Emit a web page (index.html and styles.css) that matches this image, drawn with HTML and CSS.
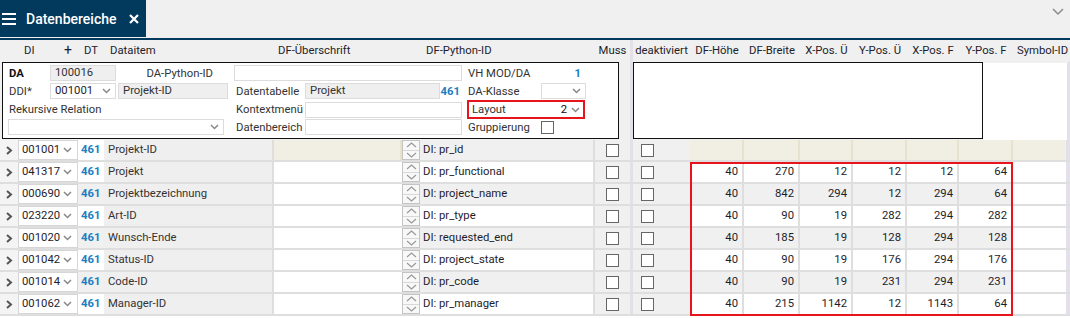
FILE: index.html
```html
<!DOCTYPE html>
<html lang="de">
<head>
    <meta charset="UTF-8">
    <title>Datenbereiche</title>
    <link rel="stylesheet" href="styles.css">
</head>
<body>
    <div class="topbar">
        <div class="tab">
            <svg class="burger" width="14" height="14" viewBox="0 0 14 14"><path d="M0 2h14M0 7h14M0 12h14" stroke="#fff" stroke-width="2"/></svg>
            <span class="tab-title">Datenbereiche</span>
            <svg class="close" width="10" height="10" viewBox="0 0 10 10"><path d="M1 1l8 8M9 1l-8 8" stroke="#fff" stroke-width="2.2"/></svg>
        </div>
        <div class="spacer"></div>
        <svg class="collapse" width="12" height="8" viewBox="0 0 12 8"><path d="M1 1l5 5 5-5" fill="none" stroke="#8a8a8a" stroke-width="1.5"/></svg>
    </div>

    <div class="grid head">
        <div></div>
        <div class="h-di"><span>DI</span><span class="plus">+</span></div>
        <div class="h-l">DT</div>
        <div class="h-l">Dataitem</div>
        <div class="h-l h-dfu">DF-Überschrift</div>
        <div></div>
        <div class="h-l">DF-Python-ID</div>
        <div class="h-c">Muss</div>
        <div class="sep"></div>
        <div class="h-c">deaktiviert</div>
        <div class="h-c">DF-Höhe</div>
        <div class="h-c">DF-Breite</div>
        <div class="h-c">X-Pos. Ü</div>
        <div class="h-c">Y-Pos. Ü</div>
        <div class="h-c">X-Pos. F</div>
        <div class="h-c">Y-Pos. F</div>
        <div class="h-l h-sym">Symbol-ID</div>
        <div></div>
    </div>

    <div class="detail">
        <div class="detail-box">
            <div class="f-row">
                <b class="lbl c1">DA</b>
                <div class="ro c2">100016</div>
                <div class="lbl c3 right">DA-Python-ID</div>
                <div class="inp c4-6 wide"></div>
                <div class="lbl c7">VH MOD/DA</div>
                <div class="num-blue c8">1</div>
            </div>
            <div class="f-row">
                <div class="lbl c1">DDI*</div>
                <div class="sel c2">001001 <svg class="chev" width="9" height="6" viewBox="0 0 9 6"><path d="M1 1l3.5 3.5L8 1" fill="none" stroke="#888" stroke-width="1.5"/></svg></div>
                <div class="ro c3">Projekt-ID</div>
                <div class="lbl c4">Datentabelle</div>
                <div class="ro c5">Projekt</div>
                <div class="num-blue c6">461</div>
                <div class="lbl c7">DA-Klasse</div>
                <div class="sel c8"><svg class="chev" width="9" height="6" viewBox="0 0 9 6"><path d="M1 1l3.5 3.5L8 1" fill="none" stroke="#888" stroke-width="1.5"/></svg></div>
            </div>
            <div class="f-row">
                <div class="lbl c1-3">Rekursive Relation</div>
                <div class="lbl c4">Kontextmenü</div>
                <div class="inp c5-6"></div>
                <div class="layout c7-8">
                    <span>Layout</span>
                    <span class="layout-val">2 <svg class="chev" width="9" height="6" viewBox="0 0 9 6"><path d="M1 1l3.5 3.5L8 1" fill="none" stroke="#888" stroke-width="1.5"/></svg></span>
                </div>
            </div>
            <div class="f-row">
                <div class="sel c1-3 rek"><svg class="chev" width="9" height="6" viewBox="0 0 9 6"><path d="M1 1l3.5 3.5L8 1" fill="none" stroke="#888" stroke-width="1.5"/></svg></div>
                <div class="lbl c4">Datenbereich</div>
                <div class="inp c5-6"></div>
                <div class="lbl c7">Gruppierung</div>
                <div class="c8 check-cell"><span class="check"></span></div>
            </div>
        </div>
        <div class="gap"></div>
        <div class="sep"></div>
        <div class="detail-side"></div>
        <div class="detail-rest"></div>
    </div>

    <div class="rows" id="rows">
        <div class="marker"></div>
    </div>

    <script>
        const rows = [
            ['001001', 'Projekt-ID', 'pr_id', []],
            ['041317', 'Projekt', 'pr_functional', [40, 270, 12, 12, 12, 64]],
            ['000690', 'Projektbezeichnung', 'project_name', [40, 842, 294, 12, 294, 64]],
            ['023220', 'Art-ID', 'pr_type', [40, 90, 19, 282, 294, 282]],
            ['001020', 'Wunsch-Ende', 'requested_end', [40, 185, 19, 128, 294, 128]],
            ['001042', 'Status-ID', 'project_state', [40, 90, 19, 176, 294, 176]],
            ['001014', 'Code-ID', 'pr_code', [40, 90, 19, 231, 294, 231]],
            ['001062', 'Manager-ID', 'pr_manager', [40, 215, 1142, 12, 1143, 64]]
        ];

        const container = document.getElementById('rows');
        const chev = '<svg class="chev" width="9" height="6" viewBox="0 0 9 6"><path d="M1 1l3.5 3.5L8 1" fill="none" stroke="#888" stroke-width="1.5"/></svg>';

        rows.forEach((r, i) => {
            const row = document.createElement('div');
            row.className = 'grid row' + (i === 0 ? ' selected' : (i % 2 === 0 ? ' odd' : ''));
            let nums = '';
            for (let k = 0; k < 6; k++) {
                nums += `<div class="n">${r[3][k] !== undefined ? r[3][k] : ''}</div>`;
            }
            row.innerHTML = `
                <div class="arrow"><svg width="7" height="9" viewBox="0 0 7 9"><path d="M1 1l4 3.5L1 8" fill="none" stroke="#555" stroke-width="2"/></svg></div>
                <div class="di">${r[0]} ${chev}</div>
                <div class="dt">461</div>
                <div class="item">${r[1]}</div>
                <div class="dfu"></div>
                <div class="spin"><span class="up"><svg width="11" height="6" viewBox="0 0 11 6"><path d="M1 5l4.5-4 4.5 4" fill="none" stroke="#999" stroke-width="1.2"/></svg></span><span class="down"><svg width="11" height="6" viewBox="0 0 11 6"><path d="M1 1l4.5 4 4.5-4" fill="none" stroke="#999" stroke-width="1.2"/></svg></span></div>
                <div class="py">DI: ${r[2]}</div>
                <div class="cb"><span class="check"></span></div>
                <div class="sep"></div>
                <div class="cb cb-left"><span class="check"></span></div>
                ${nums}
                <div class="sym"></div>
                <div class="edge"></div>
            `;
            container.appendChild(row);
        });
    </script>
</body>
</html>
```

FILE: styles.css
```css
body {
    margin: 0;
    font-family: Roboto, "Liberation Sans", sans-serif;
    font-size: 11.3px;
    color: #1d1d2b;
    background: #fff;
    width: 1070px;
    height: 318px;
    overflow: hidden;
}
.topbar {
    display: flex;
    align-items: flex-start;
    height: 38px;
    background: #f0f0f0;
    border-bottom: 2px solid #023a5e;
}
.tab {
    display: flex;
    align-items: center;
    width: 146px;
    height: 37px;
    background: #023a5e;
    color: white;
    box-sizing: border-box;
    padding-left: 2px;
}
.burger {
    margin-top: 1px;
}
.tab-title {
    font-size: 14px;
    font-weight: 500;
    margin-left: 10px;
}
.close {
    margin-left: 13px;
    margin-top: 1px;
}
.spacer {
    flex: 1;
}
.collapse {
    margin: 8px 6px 0 0;
}

/* column layout shared by header and rows */
.grid {
    display: grid;
    grid-template-columns: 18px 60px 26px 170px 128px 18px 175px 35px 3px 57px 54px 56px 53px 54px 52px 54px 53px 1fr;
}
.head {
    height: 21px;
    background: #f0f0f0;
    align-items: center;
    white-space: nowrap;
}
.head > div {
    height: 21px;
    line-height: 21px;
}
.h-di {
    display: flex;
    justify-content: space-between;
    padding: 0 6px 0 6px;
}
.plus {
    font-size: 14px;
}
.h-l {
    padding-left: 6px;
}
.h-dfu {
    padding-left: 4px;
}
.h-sym {
    padding-left: 4px;
}
.h-c {
    text-align: center;
}
.sep {
    background: #e4e0ea;
}

/* detail panel */
.detail {
    display: flex;
    height: 79px;
    background: #f0f0f0;
}
.detail-box {
    margin: 1px 0 1px 2px;
    width: 617px;
    box-sizing: border-box;
    border: 1px solid #111;
    background: white;
    padding-top: 1px;
}
.detail .gap {
    width: 11px;
}
.detail .sep {
    width: 3px;
}
.detail-side {
    width: 350px;
    box-sizing: border-box;
    margin: 1px 0 1px 0;
    border: 1px solid #111;
    background: white;
}
.detail-rest {
    flex: 1;
    background: white;
    border-top: 2px solid #f0f0f0;
    border-right: 3px solid #e4e0ea;
}
.f-row {
    display: grid;
    grid-template-columns: 45px 68px 114px 74px 136px 22px 78px 46px 1fr;
    height: 18px;
    align-items: center;
    white-space: nowrap;
}
.lbl {
    padding-left: 6px;
    color: #333;
}
b.lbl {
    color: #111;
}
.right {
    text-align: right;
    padding-right: 17px;
}
.c1 { grid-column: 1; }
.c2 { grid-column: 2; }
.c3 { grid-column: 3; }
.c4 { grid-column: 4; }
.c5 { grid-column: 5; }
.c6 { grid-column: 6; }
.c7 { grid-column: 7; }
.c8 { grid-column: 8; }
.c1-3 { grid-column: 1 / 4; }
.c4-6 { grid-column: 4 / 7; }
.c5-6 { grid-column: 5 / 7; }
.c7-8 { grid-column: 7 / 9; }
.ro, .inp, .sel {
    height: 16px;
    line-height: 14px;
    box-sizing: border-box;
    border: 1px solid #dcdcdc;
    padding-left: 4px;
}
.ro {
    background: #efefef;
    color: #333;
}
.c2.ro, .c2.sel {
    margin-left: 2px;
}
.c3.ro {
    margin-left: 2px;
    margin-right: 2px;
}
.inp {
    background: white;
}
.wide {
    margin-left: 4px;
}
.c5-6.inp {
    margin-left: 1px;
}
.c5.ro {
    margin-left: 1px;
}
.sel {
    display: flex;
    align-items: center;
    justify-content: space-between;
    background: white;
    padding-right: 4px;
}
.rek {
    margin-left: 5px;
    margin-right: 6px;
    justify-content: flex-end;
}
.c8.sel {
    margin-left: 1px;
    justify-content: flex-end;
}
.num-blue {
    color: #1b7ec2;
    font-weight: bold;
    text-align: right;
    padding-right: 2px;
}
.c8.num-blue {
    padding-right: 5px;
}
.layout {
    display: flex;
    justify-content: space-between;
    align-items: center;
    height: 19px;
    box-sizing: border-box;
    border: 2px solid #e8141b;
    margin-left: 5px;
    margin-right: 1px;
    padding: 0 3px 0 3px;
    color: #333;
}
.layout-val {
    display: flex;
    align-items: center;
    gap: 4px;
    color: #111;
}
.check-cell {
    display: flex;
    padding-left: 1px;
}
.check {
    display: inline-block;
    width: 13px;
    height: 13px;
    box-sizing: border-box;
    border: 1px solid #666;
    background: white;
    vertical-align: middle;
}

/* table rows */
.rows {
    position: relative;
}
.row {
    height: 22px;
    box-sizing: border-box;
    border-bottom: 2px solid #dedede;
    background: white;
    white-space: nowrap;
}
.row > div {
    box-sizing: border-box;
    height: 20px;
    line-height: 20px;
}
.arrow {
    display: flex;
    align-items: center;
    justify-content: center;
    background: #f4f4f4;
}
.di {
    display: flex;
    align-items: center;
    justify-content: space-between;
    background: white;
    border: 1px solid #d6d6d6;
    padding: 0 5px 0 3px;
}
.dt {
    color: #1b7ec2;
    font-weight: bold;
    padding-left: 3px;
}
.item {
    background: #efefef;
    border-right: 2px solid #dedede;
    padding-left: 4px;
    color: #333;
}
.dfu {
    background: white;
}
.spin {
    display: flex;
    flex-direction: column;
    border: 1px solid #c4c4c4;
    background: #f8f8f8;
}
.spin span {
    flex: 1;
    display: flex;
    align-items: center;
    justify-content: center;
}
.spin .up {
    border-bottom: 1px solid #d8d8d8;
}
.py {
    padding-left: 3px;
    background: white;
    border-right: 2px solid #dedede;
}
.cb {
    display: flex;
    align-items: center;
    justify-content: center;
    background: #f0f0f0;
}
.cb-left {
    justify-content: flex-start;
    padding-left: 8px;
}
.n {
    text-align: right;
    padding-right: 4px;
    border-right: 2px solid #dedede;
    background: white;
}
.sym {
    background: white;
}
.edge {
    background: #e4e0ea;
}
.odd .py, .odd .n, .odd .dt {
    background: #f0f0f0;
}
.selected .dfu, .selected .n, .selected .sym {
    background: #f1eee4;
}
.selected .n, .selected .dfu {
    border-right: 2px solid #e8e1cc;
}
.selected .py {
    background: #f0f0f0;
}
.marker {
    position: absolute;
    left: 690px;
    top: 22px;
    width: 323px;
    height: 154px;
    box-sizing: border-box;
    border: 2px solid #e8141b;
    pointer-events: none;
    z-index: 1;
}
```
